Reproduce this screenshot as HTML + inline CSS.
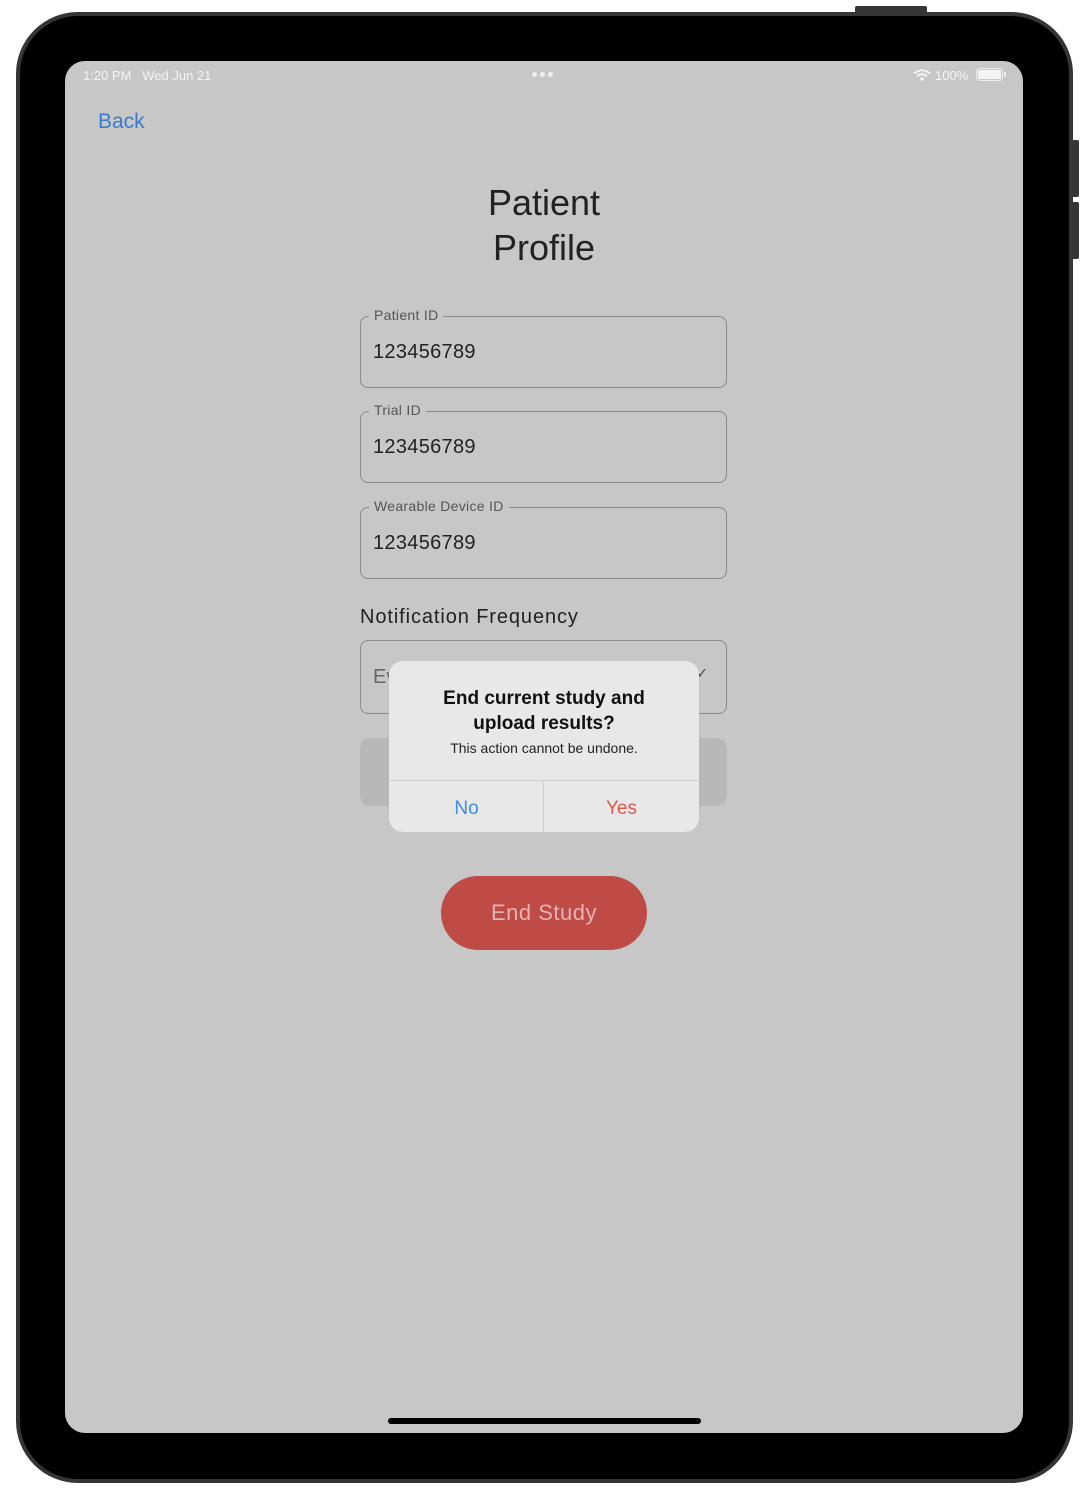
<!DOCTYPE html>
<html><head><meta charset="utf-8"><style>
*{margin:0;padding:0;box-sizing:border-box}
body{width:1088px;height:1496px;background:#fff;position:relative;overflow:hidden;font-family:"Liberation Sans","DejaVu Sans",sans-serif}
.abs{position:absolute}
.frame{left:16px;top:12px;width:1057px;height:1471px;background:#000;border:4px solid #353535;border-radius:62px}
.screen{left:65px;top:61px;width:958px;height:1372px;background:#c7c7c7;border-radius:20px;overflow:hidden}
.sb{color:#f4f4f4;font-size:13px;top:7px}
.field{left:295px;width:367px;height:72px;border:1.3px solid #8a8a8a;border-radius:8px}
.lbl{position:absolute;left:8px;top:-10px;background:#c7c7c7;padding:0 5px;font-size:14px;color:#555;letter-spacing:0.3px}
.val{position:absolute;left:12px;top:24px;font-size:20px;color:#222;letter-spacing:0.3px}
</style></head><body>
<div class="abs" style="left:855px;top:6px;width:72px;height:7px;background:#353535;border-radius:2px"></div>
<div class="abs" style="left:1072px;top:140px;width:7px;height:57px;background:#353535;border-radius:2px"></div>
<div class="abs" style="left:1072px;top:202px;width:7px;height:57px;background:#353535;border-radius:2px"></div>
<div class="abs frame"></div>
<div class="abs screen">
  <div class="abs sb" style="left:18px">1:20 PM&nbsp;&nbsp;&nbsp;Wed Jun 21</div>
  <div class="abs" style="left:467px;top:11px;font-size:0">
    <span style="display:inline-block;width:5px;height:5px;border-radius:50%;background:#eee;margin-right:3px"></span><span style="display:inline-block;width:5px;height:5px;border-radius:50%;background:#eee;margin-right:3px"></span><span style="display:inline-block;width:5px;height:5px;border-radius:50%;background:#eee"></span>
  </div>
  <svg class="abs" style="left:848px;top:8px" width="18" height="12" viewBox="0 0 18 12"><path d="M1 4.5Q9-2 17 4.5" stroke="#f4f4f4" stroke-width="2" fill="none"/><path d="M4 7.3Q9 3 14 7.3" stroke="#f4f4f4" stroke-width="2" fill="none"/><circle cx="9" cy="10" r="1.8" fill="#f4f4f4"/></svg>
  <div class="abs sb" style="left:870px">100%</div>
  <div class="abs" style="left:911px;top:7px;width:27px;height:13px;border:1px solid #eee;border-radius:4px;padding:1px"><div style="width:100%;height:100%;background:#f4f4f4;border-radius:2px"></div></div>
  <div class="abs" style="left:939px;top:11px;width:2px;height:5px;background:#eee;border-radius:1px"></div>
  <div class="abs" style="left:33px;top:49px;font-size:21px;color:#3a7bd0">Back</div>
  <div class="abs" style="left:0;width:958px;top:119px;text-align:center;font-size:36px;line-height:45px;color:#222">Patient<br>Profile</div>
  <div class="abs field" style="top:255px"><span class="lbl">Patient ID</span><span class="val">123456789</span></div>
  <div class="abs field" style="top:350px"><span class="lbl">Trial ID</span><span class="val">123456789</span></div>
  <div class="abs field" style="top:446px"><span class="lbl">Wearable Device ID</span><span class="val">123456789</span></div>
  <div class="abs" style="left:295px;top:545px;font-size:20px;color:#222;letter-spacing:0.9px">Notification Frequency</div>
  <div class="abs" style="left:295px;top:579px;width:367px;height:74px;border:1.3px solid #8a8a8a;border-radius:8px"><span style="position:absolute;left:12px;top:25px;font-size:20px;color:#666">Every</span><span style="position:absolute;right:18px;top:24px;font-size:14px;color:#444">&#x2713;</span></div>
  <div class="abs" style="left:295px;top:677px;width:367px;height:68px;background:#b8b8b8;border-radius:10px"></div>
  <div class="abs" style="left:324px;top:600px;width:310px;height:171px;background:#e8e8e8;border-radius:14px;overflow:hidden">
    <div style="text-align:center;margin-top:25px;font-size:19px;font-weight:bold;line-height:25px;color:#111">End current study and<br>upload results?</div>
    <div style="text-align:center;margin-top:4px;font-size:14px;color:#222">This action cannot be undone.</div>
    <div style="position:absolute;left:0;top:119px;width:310px;height:1px;background:#cfcfcf"></div>
    <div style="position:absolute;left:154px;top:119px;width:1px;height:52px;background:#cfcfcf"></div>
    <div style="position:absolute;left:0;top:137px;width:155px;text-align:center;font-size:19px;color:#3b8ee8">No</div>
    <div style="position:absolute;left:155px;top:137px;width:155px;text-align:center;font-size:19px;color:#e2574c">Yes</div>
  </div>
  <div class="abs" style="left:376px;top:815px;width:206px;height:74px;background:#be4b46;border-radius:37px;color:#e6b3b0;font-size:22px;text-align:center;line-height:74px;letter-spacing:0.5px">End Study</div>
  <div class="abs" style="left:323px;top:1357px;width:313px;height:6px;background:#000;border-radius:3px"></div>
</div>
</body></html>
